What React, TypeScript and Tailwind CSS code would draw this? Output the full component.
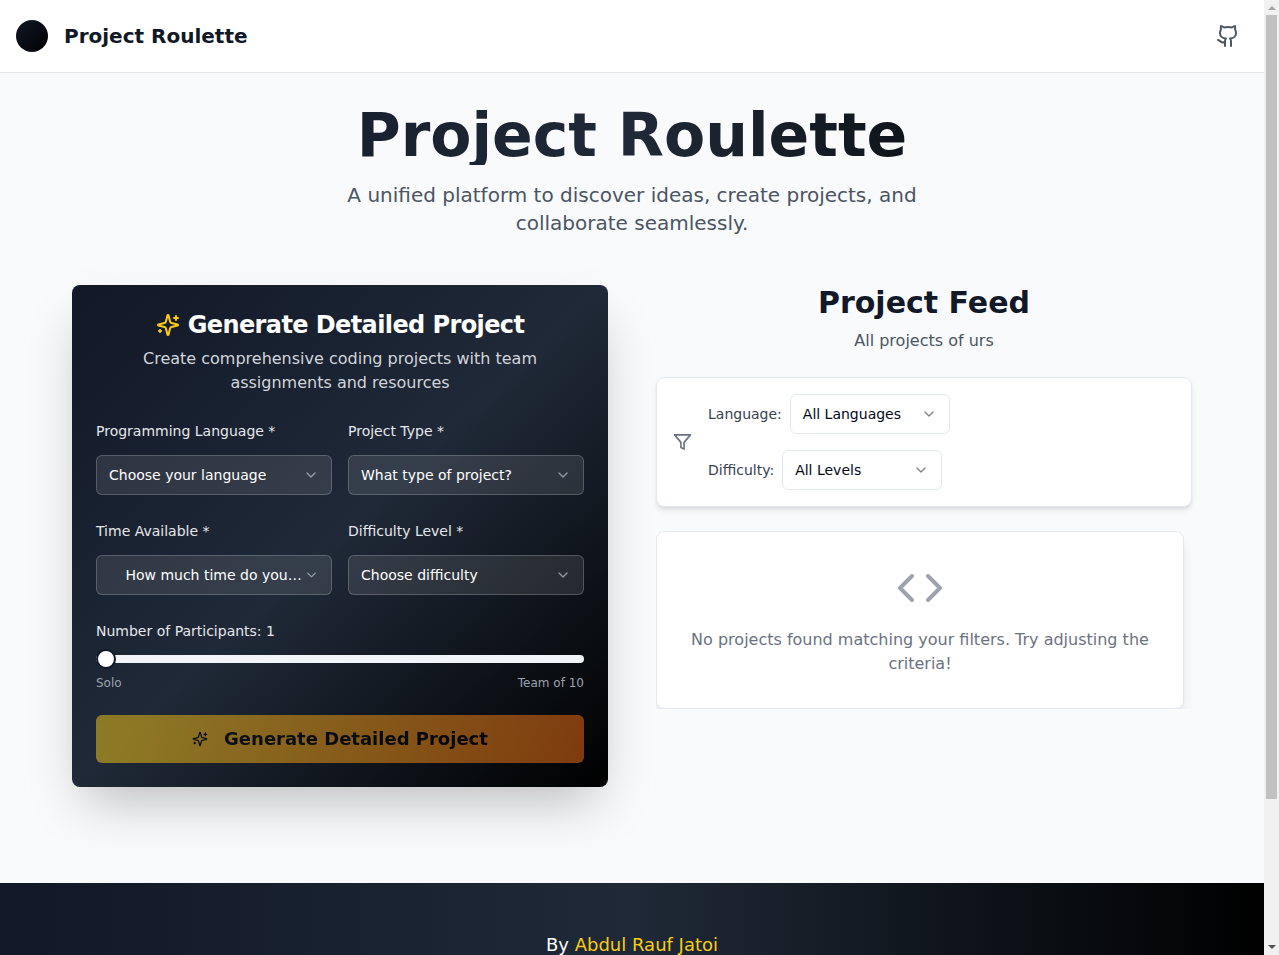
import { ReactNode } from "react";

function Sparkles({ className }: { className: string }) {
  return (
    <svg className={className} viewBox="0 0 24 24" fill="none" stroke="currentColor" strokeWidth="2" strokeLinecap="round" strokeLinejoin="round">
      <path d="M9.937 15.5A2 2 0 0 0 8.5 14.063l-6.135-1.582a.5.5 0 0 1 0-.962L8.5 9.936A2 2 0 0 0 9.937 8.5l1.582-6.135a.5.5 0 0 1 .963 0L14.063 8.5A2 2 0 0 0 15.5 9.937l6.135 1.581a.5.5 0 0 1 0 .964L15.5 14.063a2 2 0 0 0-1.437 1.437l-1.582 6.135a.5.5 0 0 1-.963 0z" />
      <path d="M20 3v4" />
      <path d="M22 5h-4" />
      <path d="M4 17v2" />
      <path d="M5 18H3" />
    </svg>
  );
}

function Github({ className }: { className: string }) {
  return (
    <svg className={className} viewBox="0 0 24 24" fill="none" stroke="currentColor" strokeWidth="2" strokeLinecap="round" strokeLinejoin="round">
      <path d="M15 22v-4a4.8 4.8 0 0 0-1-3.5c3 0 6-2 6-5.5.08-1.25-.27-2.48-1-3.5.28-1.15.28-2.35 0-3.5 0 0-1 0-3 1.5-2.64-.5-5.36-.5-8 0C6 2 5 2 5 2c-.3 1.15-.3 2.35 0 3.5A5.403 5.403 0 0 0 4 9c0 3.5 3 5.5 6 5.5-.39.49-.68 1.05-.85 1.65-.17.6-.22 1.23-.15 1.85v4" />
      <path d="M9 18c-4.51 2-5-2-7-2" />
    </svg>
  );
}

function Chevron() {
  return (
    <svg className="h-4 w-4 opacity-50" viewBox="0 0 24 24" fill="none" stroke="currentColor" strokeWidth="2" strokeLinecap="round" strokeLinejoin="round">
      <path d="m6 9 6 6 6-6" />
    </svg>
  );
}

function DarkField({ label, placeholder }: { label: string; placeholder: string }) {
  return (
    <div className="min-w-0">
      <div className="mb-3 text-sm leading-6 text-gray-200">{label}</div>
      <button className="flex h-10 w-full items-center justify-between rounded-md border border-white/20 bg-white/10 px-3 text-sm text-white">
        <span className="line-clamp-1">{placeholder}</span>
        <Chevron />
      </button>
    </div>
  );
}

function FilterField({ label, value }: { label: string; value: string }) {
  return (
    <div className="flex items-center gap-2">
      <span className="text-sm text-[#374151]">{label}</span>
      <button className="flex h-10 w-40 items-center justify-between rounded-md border border-[#e2e8f0] bg-white px-3 text-sm text-[#020817]">
        <span>{value}</span>
        <Chevron />
      </button>
    </div>
  );
}

function Panel({ className, children }: { className: string; children: ReactNode }) {
  return <div className={`rounded-lg border border-[#e2e8f0] bg-white ${className}`}>{children}</div>;
}

function Scrollbar() {
  return (
    <div className="flex w-[15px] shrink-0 flex-col items-center bg-[#f1f1f1]">
      <div className="flex h-[15px] items-center justify-center pt-px">
        <svg width="8" height="4" viewBox="0 0 8 4" fill="#a3a3a3"><path d="M4 0 8 4H0z" /></svg>
      </div>
      <div className="h-[784px] w-[11px] bg-[#c1c1c1]" />
      <div className="mt-auto flex h-[15px] items-center justify-center pb-px">
        <svg width="8" height="4" viewBox="0 0 8 4" fill="#505050"><path d="M0 0H8L4 4z" /></svg>
      </div>
    </div>
  );
}

export default function App() {
  return (
    <div className="flex h-[955px] w-[1279px] overflow-hidden font-['DejaVu_Sans',sans-serif]">
      <div className="min-w-0 flex-1 overflow-hidden bg-[#f9fafc]">
        <header className="flex h-[73px] items-center justify-between border-b border-[#e5e7eb] bg-white px-4">
          <div className="flex items-center gap-4">
            <div className="h-8 w-8 rounded-full bg-[linear-gradient(to_bottom_right,#111827,#000000)]" />
            <span className="text-xl font-bold text-[#111827]">Project Roulette</span>
          </div>
          <a className="p-2 text-[#4b5563]"><Github className="h-6 w-6" /></a>
        </header>

        <main className="mx-auto w-[1120px] pt-8 pb-24">
          <div className="mb-12 text-center">
            <h1 className="mb-4 bg-[linear-gradient(to_right,#111827,#1f2937,#000000)] bg-clip-text text-6xl leading-none font-bold text-transparent">
              Project Roulette
            </h1>
            <p className="mx-auto max-w-2xl text-xl text-[#4b5563]">
              A unified platform to discover ideas, create projects, and collaborate seamlessly.
            </p>
          </div>

          <div className="grid grid-cols-2 items-start gap-12">
            <section className="rounded-lg bg-[linear-gradient(to_bottom_right,#111827,#1f2937,#000000)] p-6 shadow-2xl">
              <div className="mb-6 text-center">
                <h2 className="mb-1.5 flex items-center justify-center gap-2 text-2xl font-bold tracking-tight text-white">
                  <Sparkles className="h-6 w-6 text-[#facc15]" />
                  Generate Detailed Project
                </h2>
                <p className="text-base text-[#d1d5db]">
                  Create comprehensive coding projects with team assignments and resources
                </p>
              </div>
              <div className="grid grid-cols-2 gap-x-4 gap-y-6">
                <DarkField label="Programming Language *" placeholder="Choose your language" />
                <DarkField label="Project Type *" placeholder="What type of project?" />
                <DarkField label="Time Available *" placeholder="How much time do you have?" />
                <DarkField label="Difficulty Level *" placeholder="Choose difficulty" />
              </div>
              <div className="mt-6">
                <div className="mb-3 text-sm leading-6 text-gray-200">Number of Participants: 1</div>
                <div className="flex h-2 items-center rounded-full bg-[#f1f5f9]">
                  <div className="h-5 w-5 rounded-full border-2 border-[#0f172a] bg-white" />
                </div>
                <div className="mt-3 flex justify-between text-xs text-[#9ca3af]">
                  <span>Solo</span>
                  <span>Team of 10</span>
                </div>
              </div>
              <button className="mt-6 flex h-12 w-full items-center justify-center gap-4 rounded-md bg-[linear-gradient(to_right,#facc15,#f97316)] text-lg font-bold text-black opacity-50">
                <Sparkles className="h-4 w-4" />
                Generate Detailed Project
              </button>
            </section>

            <section>
              <div className="mb-6 text-center">
                <h2 className="mb-2 text-3xl font-bold text-[#111827]">Project Feed</h2>
                <p className="text-base text-[#4b5563]">All projects of urs</p>
              </div>
              <Panel className="mb-6 flex items-center gap-4 p-4 shadow-md">
                <svg className="h-5 w-[19px] shrink-0 text-[#6b7280]" viewBox="0 0 24 24" fill="none" stroke="currentColor" strokeWidth="2" strokeLinecap="round" strokeLinejoin="round">
                  <polygon points="22 3 2 3 10 12.46 10 19 14 21 14 12.46 22 3" />
                </svg>
                <div className="flex flex-col gap-4">
                  <FilterField label="Language:" value="All Languages" />
                  <FilterField label="Difficulty:" value="All Levels" />
                </div>
              </Panel>
              <div className="overflow-hidden pr-2">
                <Panel className="p-8 text-center shadow-lg">
                  <svg className="mx-auto mb-4 h-12 w-12 text-[#9ca3af]" viewBox="0 0 24 24" fill="none" stroke="currentColor" strokeWidth="2" strokeLinecap="round" strokeLinejoin="round">
                    <polyline points="16 18 22 12 16 6" />
                    <polyline points="8 6 2 12 8 18" />
                  </svg>
                  <p className="text-base text-[#6b7280]">
                    No projects found matching your filters. Try adjusting the criteria!
                  </p>
                </Panel>
              </div>
            </section>
          </div>
        </main>

        <footer className="bg-[linear-gradient(to_right,#111827,#1f2937,#000000)] py-12 text-center text-lg text-white">
          <p>By <a className="text-[#facc15]">Abdul Rauf Jatoi</a></p>
        </footer>
      </div>
      <Scrollbar />
    </div>
  );
}
